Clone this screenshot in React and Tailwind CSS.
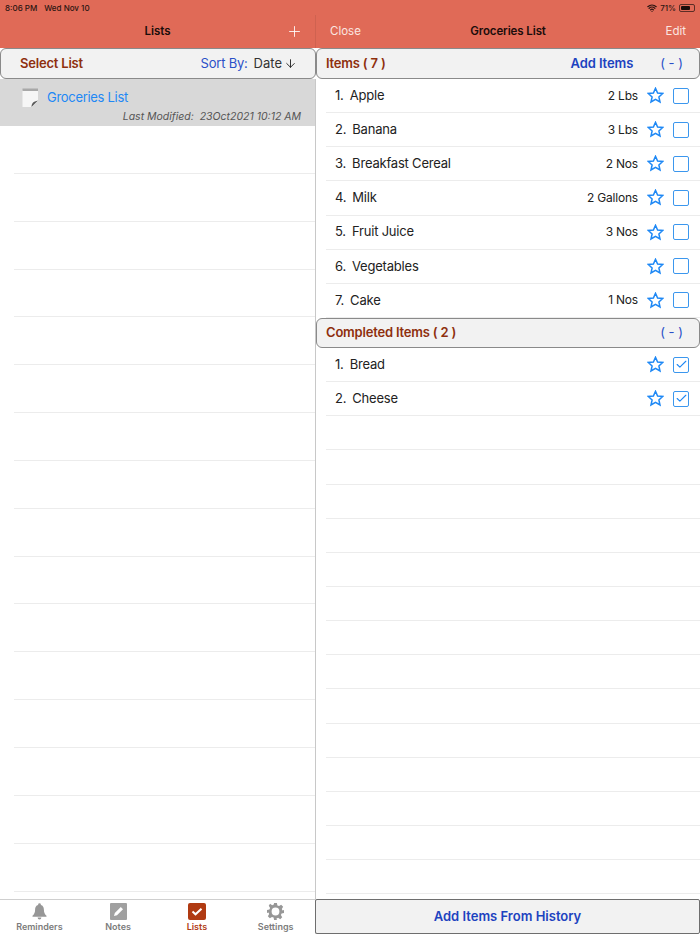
import { Plus, ArrowDown, Check, Wifi } from 'lucide-react';

const items = [
    { name: 'Apple', qty: '2 Lbs' },
    { name: 'Banana', qty: '3 Lbs' },
    { name: 'Breakfast Cereal', qty: '2 Nos' },
    { name: 'Milk', qty: '2 Gallons' },
    { name: 'Fruit Juice', qty: '3 Nos' },
    { name: 'Vegetables', qty: '' },
    { name: 'Cake', qty: '1 Nos' },
];

const completed = ['Bread', 'Cheese'];

// blank ruled lines under the lists
const leftLines = Array.from({ length: 16 });
const rightLines = Array.from({ length: 14 });

function NotepadIcon() {
    return (
        <svg width="17" height="20" viewBox="0 0 17 20">
            <path d="M0.500 2h15.500v11l-6 6H0.500z" fill="#f6f6f6" />
            <rect x="0.500" y="0.500" width="15.500" height="2.500" fill="#a8a8a8" />
            <path d="M16 12.500l-6.500 6.500c0-3.500 1.500-5.500 6.500-6.500z" fill="#5a5a5a" />
        </svg>
    );
}

function StarIcon() {
    return (
        <svg width="17" height="17" viewBox="0 0 17 17" className="mr-[9px] shrink-0">
            <path
                d="M8.500 1.300l2.100 4.700 5.100.5-3.800 3.400 1.100 5.100-4.500-2.600-4.500 2.600 1.100-5.100L1.300 6.500l5.100-.5z"
                fill="none"
                stroke="#1e88f5"
                strokeWidth="1.500"
                strokeLinejoin="miter"
            />
        </svg>
    );
}

function BellIcon() {
    return (
        <svg width="17" height="17" viewBox="0 0 17 17" fill="#979797">
            <circle cx="8.500" cy="1.600" r="1.300" />
            <path d="M8.500 1.800c-3 0-4.400 2.200-4.400 5 0 3-1 4.600-2.600 6v1h14v-1c-1.600-1.400-2.600-3-2.600-6 0-2.800-1.400-5-4.400-5z" />
            <path d="M6.600 14.600h3.800a1.900 1.900 0 0 1-3.800 0z" />
        </svg>
    );
}

function NoteIcon() {
    return (
        <svg width="17" height="17" viewBox="0 0 17 17">
            <rect width="17" height="17" rx="1" fill="#a0a0a0" />
            <path d="M4 13l.8-3 6-6 2.200 2.200-6 6z" fill="#fff" />
        </svg>
    );
}

function ListsIcon() {
    return (
        <svg width="18" height="17" viewBox="0 0 18 17">
            <rect width="18" height="17" rx="2" fill="#b03a12" />
            <path d="M4.500 8.500l3 2.800 6-5.600" fill="none" stroke="#fff" strokeWidth="2" />
        </svg>
    );
}

function GearIcon() {
    return (
        <svg width="17" height="17" viewBox="0 0 24 24">
            <path
                fill="#979797"
                fillRule="evenodd"
                d="M10 0h4l.7 3.400 2.300 1 3-1.900 2.800 2.800-1.900 3 1 2.300L24 10v4l-3.400.7-1 2.300 1.900 3-2.800 2.800-3-1.900-2.300 1L14 24h-4l-.7-3.400-2.300-1-3 1.900-2.800-2.800 1.900-3-1-2.300L0 14v-4l3.400-.7 1-2.300-1.900-3L4.300 1.200l3 1.900 2.300-1zM12 6.500a5.500 5.500 0 1 0 0 11 5.500 5.500 0 0 0 0-11z"
            />
        </svg>
    );
}

function ItemRow({ index, name, qty, done }) {
    return (
        <div className="ml-[10px] h-[34.15px] shrink-0 flex items-center border-b border-[#ececec] pl-[9px] pr-[11px] text-[13px] tracking-[-0.2px] text-[#222]">
            <span className="mr-[6px]">{index}.</span>
            <span className="flex-1">{name}</span>
            {qty && <span className="text-[12px] mr-[9px]">{qty}</span>}
            <StarIcon />
            <span className="w-[16px] h-[16px] rounded-[2px] border-[1.5px] border-[#3b97ee] flex items-center justify-center">
                {done && <Check size={13} strokeWidth={2} className="text-[#1e88f5]" />}
            </span>
        </div>
    );
}

function TabItem({ icon, label, active }) {
    return (
        <div className="flex-1 flex flex-col items-center pt-[3px]">
            {icon}
            <span className={`text-[9px] leading-[11px] mt-[1px] font-semibold ${active ? 'text-[#b03a12]' : 'text-[#7c7c7c]'}`}>
                {label}
            </span>
        </div>
    );
}

export default function App() {
    return (
        <div className="w-[700px] h-[934px] overflow-hidden flex flex-col bg-white font-['Inter',sans-serif]">

            {/* status bar */}
            <div className="h-[15px] shrink-0 bg-[#e06a57] flex items-center justify-between pl-[5px] pr-[5px] text-[8px] font-medium text-[#2a1512]">
                <div className="flex gap-[7px]">
                    <span>8:06 PM</span>
                    <span>Wed Nov 10</span>
                </div>
                <div className="flex items-center gap-[3px]">
                    <Wifi size={10} strokeWidth={3} />
                    <span>71%</span>
                    <span className="w-[16px] h-[8px] rounded-[2px] border border-[#5c2d25] p-[1px] flex">
                        <span className="w-[9px] bg-[#1a0d0b] rounded-[1px]" />
                    </span>
                </div>
            </div>

            <div className="flex-1 flex min-h-0">

                {/* left column */}
                <div className="w-[316px] shrink-0 flex flex-col">
                    <div className="h-[33px] shrink-0 bg-[#e06a57] border-r border-[#cf6250] flex items-center relative">
                        <span className="flex-1 text-center text-[11.5px] font-semibold text-[#1a0d0b]">Lists</span>
                        <Plus size={17} strokeWidth={1.2} className="absolute right-[12px] text-white" />
                    </div>

                    <div className="h-[31px] shrink-0 bg-[#f2f2f2] border border-[#8a8a8a] rounded-[6px] flex items-center pl-[19px] pr-[18px] text-[13px]">
                        <span className="font-semibold tracking-[-0.2px] text-[#8e2f0e] flex-1">Select List</span>
                        <span className="text-[#2a50c8] tracking-[-0.2px] mr-[6px]">Sort By:</span>
                        <span className="text-[#333] mr-[2px]">Date</span>
                        <ArrowDown size={13} strokeWidth={1.7} className="text-[#222]" />
                    </div>

                    <div className="h-[47px] shrink-0 bg-[#d8d8d8] border-r border-[#c8c8c8] pl-[22px] pr-[14px] pt-[9px] relative">
                        <div className="flex items-center gap-[8px]">
                            <NotepadIcon />
                            <span className="text-[13px] tracking-[-0.3px] text-[#1e88f5]">Groceries List</span>
                        </div>
                        <div className="absolute right-[14px] bottom-[1px] italic text-[10.5px] text-[#555]">
                            Last Modified:&nbsp; 23Oct2021 10:12 AM
                        </div>
                    </div>

                    <div className="flex-1 min-h-0 overflow-hidden border-r border-[#c8c8c8]">
                        {leftLines.map((_, i) => (
                            <div key={i} className="ml-[14px] h-[47.85px] border-b border-[#ececec]" />
                        ))}
                    </div>

                    <div className="h-[35px] shrink-0 border-t border-r border-[#cfcfcf] flex">
                        <TabItem icon={<BellIcon />} label="Reminders" />
                        <TabItem icon={<NoteIcon />} label="Notes" />
                        <TabItem icon={<ListsIcon />} label="Lists" active />
                        <TabItem icon={<GearIcon />} label="Settings" />
                    </div>
                </div>

                {/* right column */}
                <div className="flex-1 min-w-0 flex flex-col">
                    <div className="h-[33px] shrink-0 bg-[#e06a57] flex items-center pl-[14px] pr-[14px] text-[11.5px]">
                        <span className="flex-1 text-[#fbe6e1]">Close</span>
                        <span className="font-semibold tracking-[-0.1px] text-[#1a0d0b]">Groceries List</span>
                        <span className="flex-1 text-right text-[#fbe6e1]">Edit</span>
                    </div>

                    <div className="h-[31px] shrink-0 bg-[#f2f2f2] border border-[#8a8a8a] rounded-[6px] flex items-center pl-[9px] pr-[16px] text-[13px]">
                        <span className="font-semibold tracking-[-0.2px] text-[#8e2f0e] flex-1">Items ( 7 )</span>
                        <span className="font-semibold tracking-[-0.1px] text-[#1d43c0] mr-[27px]">Add Items</span>
                        <span className="text-[#2a50c8]">( - )</span>
                    </div>

                    {items.map((item, i) => (
                        <ItemRow key={item.name} index={i + 1} name={item.name} qty={item.qty} />
                    ))}

                    <div className="h-[30px] shrink-0 bg-[#f2f2f2] border border-[#8a8a8a] rounded-[6px] flex items-center pl-[9px] pr-[16px] text-[13px]">
                        <span className="font-semibold tracking-[-0.2px] text-[#8e2f0e] flex-1">Completed Items ( 2 )</span>
                        <span className="text-[#2a50c8]">( - )</span>
                    </div>

                    {completed.map((name, i) => (
                        <ItemRow key={name} index={i + 1} name={name} done />
                    ))}

                    <div className="flex-1 min-h-0 overflow-hidden">
                        {rightLines.map((_, i) => (
                            <div key={i} className="ml-[10px] h-[34.15px] border-b border-[#ececec]" />
                        ))}
                    </div>

                    <div className="-ml-px h-[35px] shrink-0 bg-[#f2f2f2] border border-[#6e6e6e] rounded-[2px] flex items-center justify-center text-[13px] font-semibold text-[#1d43c0]">
                        Add Items From History
                    </div>
                </div>
            </div>
        </div>
    );
}
